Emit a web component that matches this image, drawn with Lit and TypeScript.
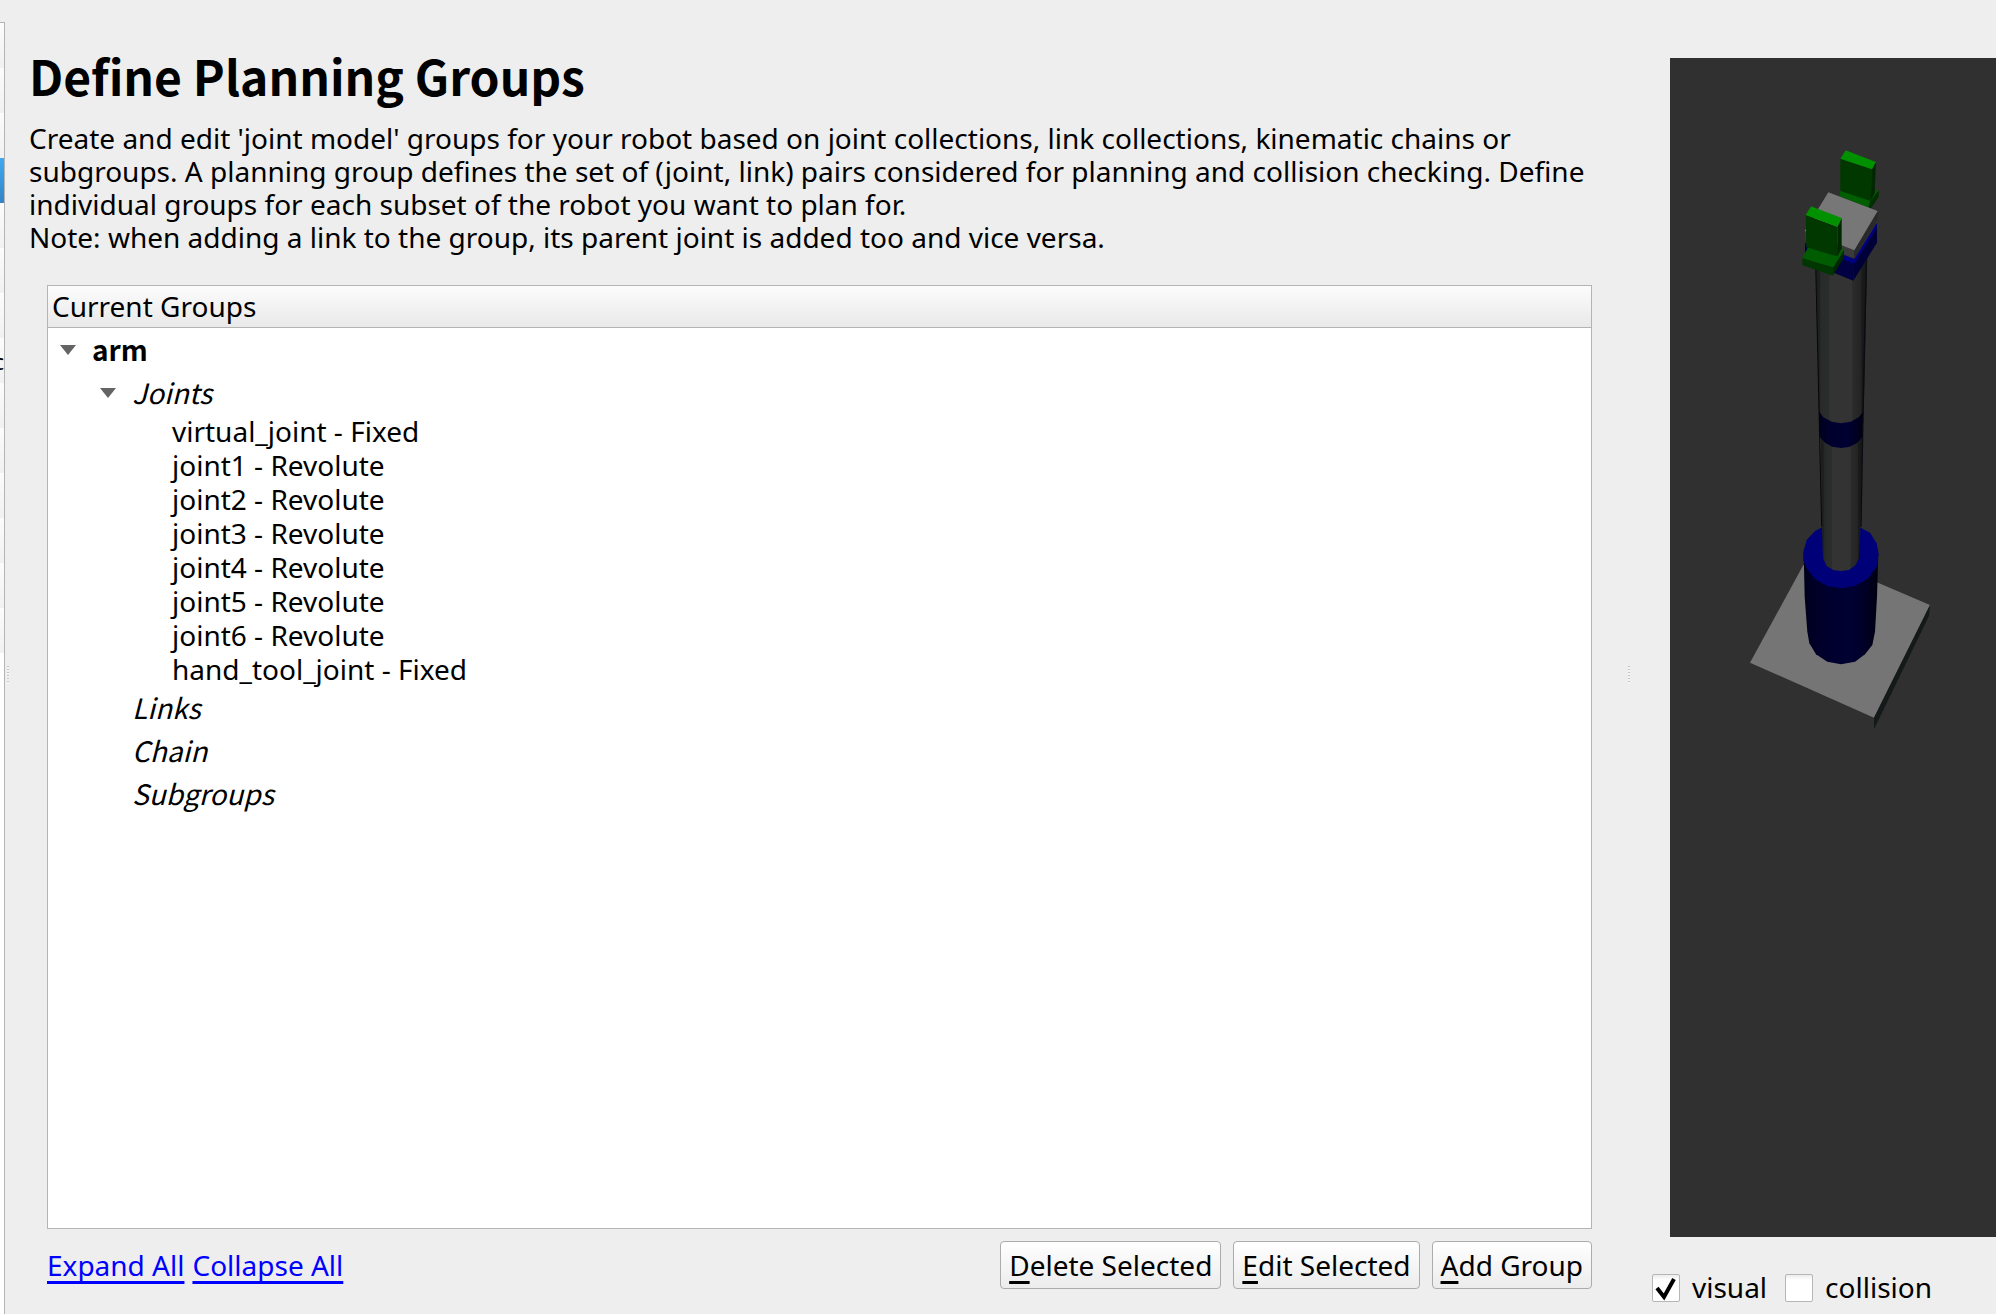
import { LitElement, html, css, svg } from 'lit';
import { customElement, state } from 'lit/decorators.js';
import { classMap } from 'lit/directives/class-map.js';

interface TreeNode {
  label: string;
  kind: 'group' | 'section' | 'item';
  children?: TreeNode[];
}

const TREE: TreeNode[] = [
  {
    label: 'arm',
    kind: 'group',
    children: [
      {
        label: 'Joints',
        kind: 'section',
        children: [
          { label: 'virtual_joint - Fixed', kind: 'item' },
          { label: 'joint1 - Revolute', kind: 'item' },
          { label: 'joint2 - Revolute', kind: 'item' },
          { label: 'joint3 - Revolute', kind: 'item' },
          { label: 'joint4 - Revolute', kind: 'item' },
          { label: 'joint5 - Revolute', kind: 'item' },
          { label: 'joint6 - Revolute', kind: 'item' },
          { label: 'hand_tool_joint - Fixed', kind: 'item' },
        ],
      },
      { label: 'Links', kind: 'section' },
      { label: 'Chain', kind: 'section' },
      { label: 'Subgroups', kind: 'section' },
    ],
  },
];

/** Left navigation strip; only its right edge is visible. */
@customElement('nav-strip')
export class NavStrip extends LitElement {
  static styles = css`
    :host {
      display: block;
      margin-top: 22px;
      background: #fff;
      border-top: 1px solid #b4b4b4;
      border-right: 1px solid #b4b4b4;
      overflow: hidden;
      font: 22px 'Noto Sans', sans-serif;
    }
    .row {
      display: flex;
      align-items: center;
      justify-content: flex-end;
      height: 45px;
      background: linear-gradient(#fcfcfc, #f1f1f1);
      overflow: hidden;
    }
    .active {
      background: linear-gradient(#3daaf2, #3583c6);
    }
  `;

  render() {
    return Array.from(
      { length: 14 },
      (_, i) => html`<div class=${classMap({ row: true, active: i === 3 })}>${i === 7 ? 'c' : ''}</div>`,
    );
  }
}

/** Collapsible tree of planning groups. */
@customElement('group-tree')
export class GroupTree extends LitElement {
  @state() private closed = new Set<string>();

  static styles = css`
    :host {
      display: flex;
      flex-direction: column;
      background: #fff;
      border: 1px solid #b4b4b4;
    }
    .head {
      padding: 0 4px;
      line-height: 41px;
      background: linear-gradient(#fcfcfc, #e9e9e9);
      border-bottom: 1px solid #b4b4b4;
    }
    ul {
      margin: 0;
      padding: 0 0 0 40px;
      list-style: none;
    }
    .root {
      padding-left: 4px;
    }
    .row {
      display: flex;
      align-items: center;
      line-height: 34px;
    }
    .group,
    .section {
      line-height: 43px;
      font-family: 'Noto Sans CJK SC', sans-serif;
    }
    .group {
      font-weight: 700;
    }
    .section {
      font-style: italic;
    }
    .toggle {
      display: flex;
      align-items: center;
      width: 40px;
      height: 34px;
      padding: 0 8px;
      border: 0;
      background: none;
    }
    .arrow {
      width: 16px;
      height: 10px;
      fill: #646464;
    }
    .shut {
      transform: rotate(-90deg);
    }
    .blank {
      width: 40px;
    }
  `;

  expandAll() {
    this.closed = new Set();
  }

  collapseAll() {
    this.closed = new Set(['arm', 'Joints']);
  }

  private toggle(label: string) {
    const next = new Set(this.closed);
    if (!next.delete(label)) next.add(label);
    this.closed = next;
  }

  private node(n: TreeNode): unknown {
    const shut = this.closed.has(n.label);
    return html`<li>
      <div class="row ${n.kind}">
        ${n.children
          ? html`<button class="toggle" aria-label=${n.label} aria-expanded=${!shut} @click=${() => this.toggle(n.label)}>
              <svg class=${classMap({ arrow: true, shut })} viewBox="0 0 16 10"><path d="M0 0H16L8 10Z" /></svg>
            </button>`
          : html`<span class="blank"></span>`}
        <span>${n.label}</span>
      </div>
      ${n.children && !shut ? html`<ul>${n.children.map((c) => this.node(c))}</ul>` : ''}
    </li>`;
  }

  render() {
    return html`<div class="head">Current Groups</div>
      <ul class="root">${TREE.map((n) => this.node(n))}</ul>`;
  }
}

const poly = (fill: string, points: string) => svg`<polygon fill=${fill} points=${points} />`;

/** 3D view of the robot. */
@customElement('robot-view')
export class RobotView extends LitElement {
  static styles = css`
    :host {
      display: flex;
      background: #303030;
      overflow: hidden;
    }
    .scene {
      flex: 1;
      min-width: 0;
    }
  `;

  render() {
    return html`<svg class="scene" viewBox="0 0 326 1179" preserveAspectRatio="xMidYMin meet" role="img" aria-label="Robot model">
      <defs>
        <linearGradient id="pole">
          <stop offset="0" stop-color="#1a1c1c" />
          <stop offset=".08" stop-color="#202222" />
          <stop offset=".1" stop-color="#292b2b" />
          <stop offset=".26" stop-color="#2b2d2d" />
          <stop offset=".28" stop-color="#333" />
          <stop offset=".7" stop-color="#333" />
          <stop offset=".72" stop-color="#2b2b2b" />
          <stop offset=".88" stop-color="#242424" />
          <stop offset=".9" stop-color="#1a1a1a" />
          <stop offset="1" stop-color="#151717" />
        </linearGradient>
        <linearGradient id="drum">
          <stop offset="0" stop-color="#000018" />
          <stop offset=".1" stop-color="#000024" />
          <stop offset=".3" stop-color="#00002e" />
          <stop offset=".65" stop-color="#000032" />
          <stop offset=".82" stop-color="#000026" />
          <stop offset="1" stop-color="#000010" />
        </linearGradient>
      </defs>
      <g transform="translate(70 72) scale(.33333)">
        ${poly('#757575', '30,1598 190,1305 260,1290 400,1352 570,1425 402,1763')}
        ${poly('#141919', '402,1763 570,1425 567,1458 402,1798')}
        ${poly('url(#drum)', '191,1270 194,1400 202,1505 208,1540 228,1573 262,1595 303,1603 345,1595 375,1573 397,1545 405,1505 411,1400 415,1270')}
        ${poly('#000078', '190,1265 200,1230 225,1203 262,1184 303,1178 345,1184 390,1208 410,1240 416,1272 410,1310 385,1345 345,1368 303,1375 262,1368 225,1347 200,1315 190,1290')}
        ${poly('url(#pole)', '242,900 246,1200 249,1285 260,1308 280,1320 303,1323 327,1320 347,1305 357,1285 361,1200 368,900')}
        ${poly('url(#pole)', '227,380 232,600 238,880 370,880 374,750 381,380')}
        <path d="M227 400L235 750L245 1190" fill="none" stroke="#080606" stroke-width="3" />
        <path d="M380 370L371 750L363 1190" fill="none" stroke="#0a0c12" stroke-width="4" />
        ${poly('url(#drum)', '237,844 250,862 275,875 303,880 332,875 356,862 369,846 367,922 350,940 327,951 303,954 277,950 255,938 239,920')}

        ${poly('#000078', '195,338 215,346 343,401 410,280 411,292 350,412 195,362')}
        ${poly('#000042', '195,345 343,400 340,452 285,430 195,365')}
        ${poly('#000038', '343,401 411,288 411,338 340,452')}
        ${poly('#000080', '410,280 411,292 343,401 306,386 310,374 343,387')}

        ${poly('#005f00', '301,183 392,205 413,177 416,185 388,233 298,198')}
        ${poly('#002e00', '390,215 416,180 416,201 392,236 386,230')}
        ${poly('#003800', '301,86 396,118 392,213 301,183')}
        ${poly('#002800', '396,118 408,96 404,190 392,213')}
        ${poly('#009000', '317,61 408,96 396,118 301,86')}

        ${poly('#3a3a3a', '194,303 343,361 343,385 196,328')}
        ${poly('#292929', '343,361 413,243 413,267 343,385')}
        ${poly('#777', '265,187 413,243 343,361 194,303')}

        ${poly('#005c00', '205,350 292,378 309,355 312,363 280,413 187,385')}
        ${poly('#003600', '187,385 280,413 278,437 187,405')}
        ${poly('#002800', '280,413 312,361 311,384 278,437')}
        ${poly('#003800', '197,255 292,290 292,379 199,352')}
        ${poly('#002800', '292,290 305,264 305,355 292,379')}
        ${poly('#009000', '213,229 305,264 292,290 197,255')}
      </g>
    </svg>`;
  }
}

@customElement('app-root')
export class AppRoot extends LitElement {
  static styles = css`
    :host {
      display: grid;
      grid-template-columns: 5px minmax(0, 1fr) 366px;
      min-height: 100vh;
      background: #eee;
      color: #000;
      font: 28px/33px 'Noto Sans', sans-serif;
      overflow: hidden;
    }
    .main {
      display: grid;
      grid-template-columns: 24px minmax(0, 1fr) 24px;
    }
    .grip {
      align-self: center;
      justify-self: start;
      width: 2px;
      height: 18px;
      margin: 36px 2px 0;
      background: repeating-linear-gradient(#c4c4c4 0 1px, #f4f4f4 1px 3px);
    }
    .end {
      justify-self: end;
      margin-right: 0;
    }
    .pane {
      display: flex;
      flex-direction: column;
      padding-top: 40px;
    }
    h1 {
      margin: 0 0 12px;
      font: 700 48px/70px 'Noto Sans CJK SC', sans-serif;
    }
    p {
      margin: 0;
    }
    .groups {
      display: flex;
      flex: 1;
      flex-direction: column;
      padding: 31px 14px 25px 18px;
    }
    group-tree {
      flex: 1;
    }
    .foot {
      display: flex;
      align-items: center;
      gap: 12px;
      padding-top: 12px;
    }
    .links {
      display: flex;
      flex: 1;
      gap: 8px;
    }
    a,
    u {
      text-decoration: underline 3px;
      text-underline-offset: 5px;
      text-decoration-skip-ink: none;
    }
    a {
      color: #00f;
    }
    .action {
      height: 48px;
      padding: 0 8px;
      border: 1px solid #acacac;
      border-radius: 4px;
      background: linear-gradient(#fff, #ececec);
      color: inherit;
      font: inherit;
    }
    .side {
      display: flex;
      flex-direction: column;
      padding-top: 58px;
    }
    robot-view {
      flex: 1;
      margin-left: 40px;
    }
    .checks {
      display: flex;
      gap: 18px;
      padding: 32px 0 8px 22px;
    }
    label {
      display: flex;
      align-items: center;
      gap: 12px;
      line-height: 37px;
    }
    .box {
      display: grid;
      width: 28px;
      height: 28px;
    }
    .box > * {
      grid-area: 1 / 1;
    }
    input {
      appearance: none;
      width: 28px;
      height: 28px;
      margin: 0;
      border: 1px solid #b6b6b6;
      border-radius: 2px;
      background: linear-gradient(#ececec, #fff 5px);
    }
    .tick {
      visibility: hidden;
      pointer-events: none;
      fill: none;
      stroke: #000;
      stroke-width: 4;
    }
    input:checked + .tick {
      visibility: visible;
    }
  `;

  private get tree() {
    return this.renderRoot.querySelector('group-tree') as GroupTree;
  }

  private expand(e: Event) {
    e.preventDefault();
    this.tree.expandAll();
  }

  private collapse(e: Event) {
    e.preventDefault();
    this.tree.collapseAll();
  }

  private check(label: string, checked: boolean) {
    return html`<label>
      <span class="box">
        <input type="checkbox" .checked=${checked} />
        <svg class="tick" viewBox="0 0 28 28"><path d="M5 14L12 23L22 5" /></svg>
      </span>
      ${label}
    </label>`;
  }

  render() {
    return html`
      <nav-strip></nav-strip>
      <div class="main">
        <span class="grip"></span>
        <main class="pane">
          <h1>Define Planning Groups</h1>
          <p>
            Create and edit 'joint model' groups for your robot based on joint collections, link collections, kinematic
            chains or subgroups. A planning group defines the set of (joint, link) pairs considered for planning and
            collision checking. Define individual groups for each subset of the robot you want to plan for.<br />Note:
            when adding a link to the group, its parent joint is added too and vice versa.
          </p>
          <div class="groups">
            <group-tree></group-tree>
            <div class="foot">
              <div class="links">
                <a href="#expand" @click=${this.expand}>Expand All</a>
                <a href="#collapse" @click=${this.collapse}>Collapse All</a>
              </div>
              <button class="action"><u>D</u>elete Selected</button>
              <button class="action"><u>E</u>dit Selected</button>
              <button class="action"><u>A</u>dd Group</button>
            </div>
          </div>
        </main>
        <span class="grip end"></span>
      </div>
      <div class="side">
        <robot-view></robot-view>
        <div class="checks">${this.check('visual', true)}${this.check('collision', false)}</div>
      </div>
    `;
  }
}
